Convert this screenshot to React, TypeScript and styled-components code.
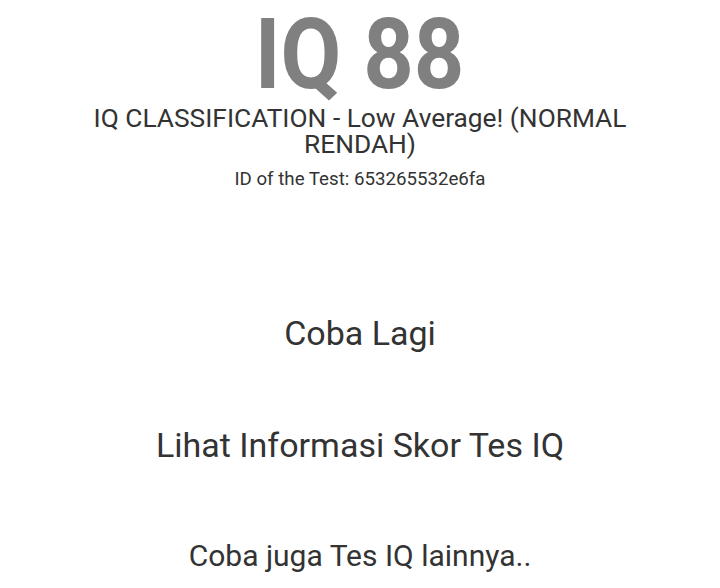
import React from "react";
import styled, { createGlobalStyle } from "styled-components";

const Global = createGlobalStyle`
  html, body { margin: 0; padding: 0; background: #fff; }
  body { font-family: Roboto, "Noto Sans", sans-serif; color: #333; }
`;

const Page = styled.main`
  display: flex;
  flex-direction: column;
  align-items: center;
  text-align: center;
  padding: 0 80px;
`;

const Score = styled.h1`
  margin: 5px 0 0;
  font-size: 98px;
  line-height: 100px;
  font-weight: 700;
  color: #808080;
  transform: scaleX(0.9);
`;

const Classification = styled.h3`
  margin: 0;
  font-size: 26.3px;
  line-height: 26px;
  font-weight: 400;
  color: #333;
`;

const TestId = styled.p`
  margin: 10px 0 0;
  font-size: 18.7px;
  line-height: 24px;
  color: #333;
`;

const Links = styled.div`
  display: flex;
  flex-direction: column;
  align-items: center;
  gap: 74px;
  margin-top: 123px;
`;

const LinkText = styled.a<{ $small?: boolean }>`
  font-size: ${(p) => (p.$small ? "30px" : "34px")};
  line-height: ${(p) => (p.$small ? "34px" : "38px")};
  margin-top: ${(p) => (p.$small ? "1px" : "0")};
  color: #333;
  text-decoration: none;
`;

export default function App() {
  return (
    <>
      <Global />
      <Page>
        <Score>IQ 88</Score>
        <Classification>IQ CLASSIFICATION - Low Average! (NORMAL RENDAH)</Classification>
        <TestId>ID of the Test: 653265532e6fa</TestId>
        <Links>
          <LinkText href="#">Coba Lagi</LinkText>
          <LinkText href="#">Lihat Informasi Skor Tes IQ</LinkText>
          <LinkText href="#" $small>
            Coba juga Tes IQ lainnya..
          </LinkText>
        </Links>
      </Page>
    </>
  );
}
